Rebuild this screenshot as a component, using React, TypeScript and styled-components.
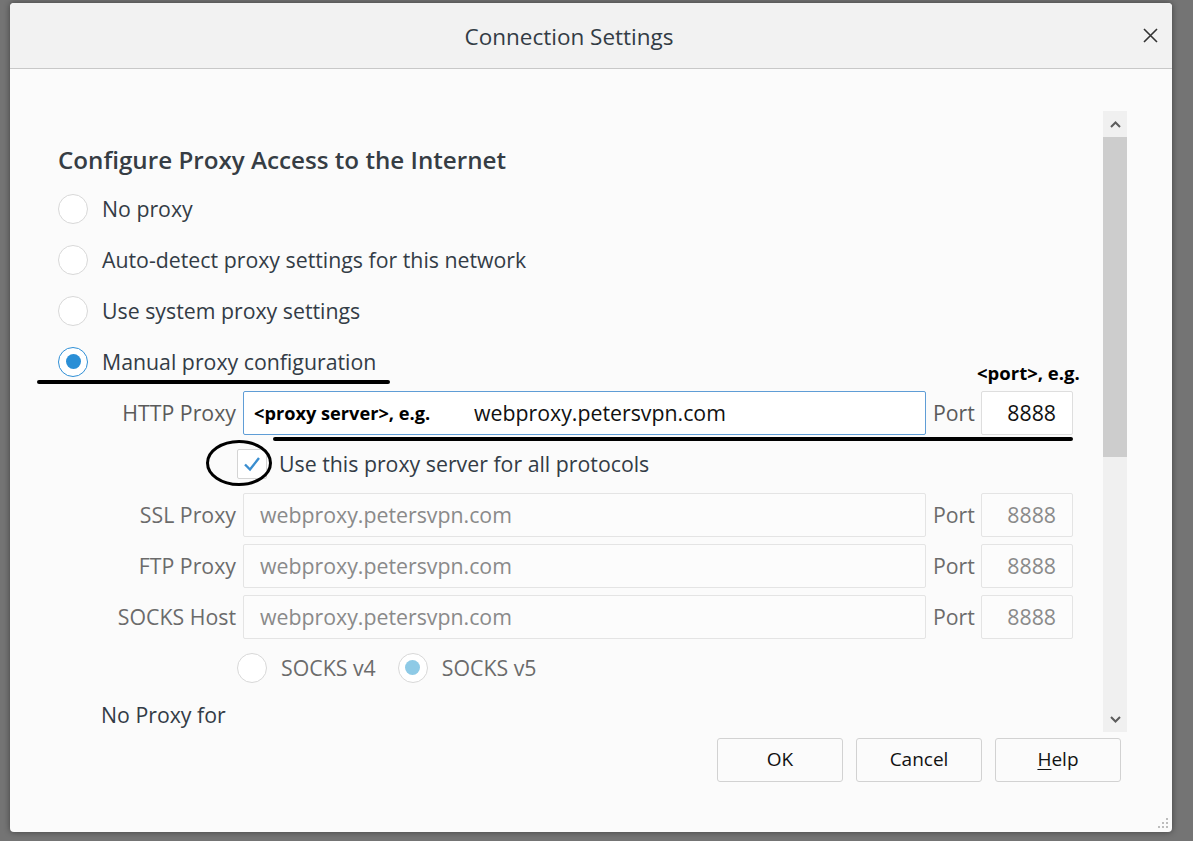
import React from 'react'
import styled, { createGlobalStyle } from 'styled-components'

const GlobalStyle = createGlobalStyle`
  html, body {
    margin: 0;
    padding: 0;
    background: #747474;
  }
  * {
    box-sizing: border-box;
  }
  body {
    font-family: "Open Sans", "Noto Sans", sans-serif;
  }
`

const Page = styled.div`
  width: 1193px;
  height: 841px;
  padding: 3px 0 0 10px;
  background: #747474;
  overflow: hidden;
`

const Dialog = styled.div`
  width: 1162px;
  height: 829px;
  display: flex;
  flex-direction: column;
  background: #fbfbfb;
  border-radius: 4px;
  box-shadow: 0 0 6px rgba(0, 0, 0, 0.45);
  position: relative;
  overflow: hidden;
`

const TitleBar = styled.div`
  height: 66px;
  flex-shrink: 0;
  display: grid;
  grid-template-columns: 1fr auto 1fr;
  align-items: center;
  background: #f2f2f2;
  border-bottom: 1px solid #c8c8c8;
`

const Title = styled.div`
  grid-column: 2;
  font-size: 22.5px;
  color: #333c45;
  padding: 2px 44px 0 0;
`

const CloseButton = styled.div`
  justify-self: end;
  padding-right: 14px;
  display: flex;
  align-items: center;
  svg {
    display: block;
  }
`

const Body = styled.div`
  height: 663px;
  flex-shrink: 0;
  display: flex;
`

const Content = styled.div`
  flex: 1;
  overflow: hidden;
  padding: 63px 0 0 48px;
  color: #333c46;
`

const Heading = styled.div`
  height: 51px;
  display: flex;
  align-items: center;
  padding-top: 4px;
  font-size: 24.2px;
  font-weight: 600;
  color: #363d44;
`

const Row = styled.div<{ $indent?: number; $height?: number }>`
  height: ${p => p.$height ?? 51}px;
  display: flex;
  align-items: center;
  position: relative;
  padding-left: ${p => p.$indent ?? 0}px;
  font-size: 21.3px;
`

const RadioCircle = styled.span<{ $checked?: boolean; $disabled?: boolean }>`
  width: 30px;
  height: 30px;
  border-radius: 50%;
  flex-shrink: 0;
  background: #fff;
  border: 1px solid ${p => (p.$checked && !p.$disabled ? '#2f8fd6' : '#d8d8d8')};
  display: flex;
  align-items: center;
  justify-content: center;
  margin-right: 14px;
  &::after {
    content: '';
    width: 15px;
    height: 15px;
    border-radius: 50%;
    background: ${p => (p.$disabled ? '#8ecae6' : '#2b8fd6')};
    display: ${p => (p.$checked ? 'block' : 'none')};
  }
`

const RadioLabel = styled.span<{ $disabled?: boolean }>`
  color: ${p => (p.$disabled ? '#6b6b6b' : '#333c46')};
  margin-right: 22px;
`

const Underline = styled.div<{ $left: number; $width: number; $bottom: number }>`
  position: absolute;
  left: ${p => p.$left}px;
  width: ${p => p.$width}px;
  bottom: ${p => p.$bottom}px;
  height: 4px;
  border-radius: 2px;
  background: #000;
`

const FieldRow = styled.div`
  height: 51px;
  display: grid;
  grid-template-columns: 185px 683px 55px 92px;
  align-items: center;
  position: relative;
  font-size: 21.3px;
`

const FieldLabel = styled.div<{ $disabled?: boolean }>`
  text-align: right;
  padding-right: 7px;
  color: ${p => (p.$disabled ? '#6b6b6b' : '#5a5a5a')};
  white-space: nowrap;
`

const FieldBox = styled.div<{ $active?: boolean }>`
  height: 44px;
  display: flex;
  align-items: center;
  padding-left: ${p => (p.$active ? 10 : 16)}px;
  background: ${p => (p.$active ? '#fff' : '#fcfcfc')};
  border: 1px solid ${p => (p.$active ? '#5f9dd6' : '#e4e4e4')};
  border-radius: 2px;
  color: ${p => (p.$active ? '#111' : '#8a8a8a')};
  white-space: nowrap;
`

const Hint = styled.span`
  display: inline-block;
  width: 220px;
  font-size: 18.2px;
  font-weight: 700;
  color: #000;
`

const PortLabel = styled.div<{ $disabled?: boolean }>`
  padding-left: 7px;
  color: ${p => (p.$disabled ? '#6b6b6b' : '#5a5a5a')};
`

const PortBox = styled.div<{ $active?: boolean }>`
  height: 44px;
  display: flex;
  align-items: center;
  justify-content: flex-end;
  padding-right: 16px;
  position: relative;
  background: ${p => (p.$active ? '#fff' : '#fcfcfc')};
  border: 1px solid ${p => (p.$active ? '#dedede' : '#e4e4e4')};
  border-radius: 2px;
  color: ${p => (p.$active ? '#111' : '#8a8a8a')};
`

const PortHint = styled.span`
  position: absolute;
  left: -5px;
  bottom: calc(100% + 7px);
  font-size: 18.5px;
  font-weight: 700;
  color: #000;
  white-space: nowrap;
`

const CheckWrap = styled.span`
  position: relative;
  width: 30px;
  height: 30px;
  margin-right: 12px;
  flex-shrink: 0;
`

const CheckBox = styled.span`
  width: 30px;
  height: 30px;
  display: flex;
  align-items: center;
  justify-content: center;
  background: #fff;
  border: 1px solid #d4d4d4;
  border-radius: 2px;
`

const Ring = styled.svg`
  position: absolute;
  left: -31px;
  top: -9px;
  overflow: visible;
`

const Scrollbar = styled.div`
  width: 24px;
  margin: 42px 45px 0 0;
  display: flex;
  flex-direction: column;
  background: #f0f0f0;
`

const ScrollButton = styled.div`
  height: 26px;
  display: flex;
  align-items: center;
  justify-content: center;
`

const Thumb = styled.div`
  height: 320px;
  background: #cdcdcd;
`

const Track = styled.div`
  flex: 1;
`

const Footer = styled.div`
  flex: 1;
  display: flex;
  justify-content: flex-end;
  align-items: flex-start;
  gap: 13px;
  padding: 6px 51px 0 0;
`

const Button = styled.button`
  width: 126px;
  height: 44px;
  background: #fbfbfb;
  border: 1px solid #d2d2d2;
  border-radius: 3px;
  font-family: "Open Sans", "Noto Sans", sans-serif;
  font-size: 19px;
  color: #111;
  padding: 0 0 2px;
  u {
    text-decoration-thickness: 1px;
    text-underline-offset: 3px;
  }
`

const Grip = styled.svg`
  position: absolute;
  right: 3px;
  bottom: 3px;
`

const Chevron = ({ up }: { up?: boolean }) => (
  <svg width="11" height="7" viewBox="0 0 11 7">
    <polyline
      points={up ? '1,6 5.5,1.5 10,6' : '1,1 5.5,5.5 10,1'}
      fill="none"
      stroke="#5c5c5c"
      strokeWidth="2"
    />
  </svg>
)

const Radio = ({
  label,
  checked,
  disabled,
}: {
  label: string
  checked?: boolean
  disabled?: boolean
}) => (
  <>
    <RadioCircle $checked={checked} $disabled={disabled} />
    <RadioLabel $disabled={disabled}>{label}</RadioLabel>
  </>
)

const disabledRows = ['SSL Proxy', 'FTP Proxy', 'SOCKS Host']

export default function App() {
  return (
    <>
      <GlobalStyle />
      <Page>
        <Dialog>
          <TitleBar>
            <Title>Connection Settings</Title>
            <CloseButton>
              <svg width="15" height="15" viewBox="0 0 15 15">
                <path d="M1 1 L14 14 M14 1 L1 14" stroke="#333" strokeWidth="1.6" />
              </svg>
            </CloseButton>
          </TitleBar>
          <Body>
            <Content>
              <Heading>Configure Proxy Access to the Internet</Heading>
              <Row>
                <Radio label="No proxy" />
              </Row>
              <Row>
                <Radio label="Auto-detect proxy settings for this network" />
              </Row>
              <Row>
                <Radio label="Use system proxy settings" />
              </Row>
              <Row>
                <Radio label="Manual proxy configuration" checked />
                <Underline $left={-21} $width={353} $bottom={3} />
              </Row>
              <FieldRow>
                <FieldLabel>HTTP Proxy</FieldLabel>
                <FieldBox $active>
                  <Hint>&lt;proxy server&gt;, e.g.</Hint>
                  webproxy.petersvpn.com
                </FieldBox>
                <PortLabel>Port</PortLabel>
                <PortBox $active>
                  <PortHint>&lt;port&gt;, e.g.</PortHint>
                  8888
                </PortBox>
                <Underline $left={215} $width={800} $bottom={-3} />
              </FieldRow>
              <Row $indent={179}>
                <CheckWrap>
                  <CheckBox>
                    <svg width="18" height="16" viewBox="0 0 18 16">
                      <polyline
                        points="2,8.5 7,13.5 16,2"
                        fill="none"
                        stroke="#3a8ed0"
                        strokeWidth="2.4"
                      />
                    </svg>
                  </CheckBox>
                  <Ring width="66" height="46" viewBox="0 0 66 46">
                    <ellipse cx="33" cy="23" rx="31.5" ry="21.5" fill="none" stroke="#000" strokeWidth="3" />
                  </Ring>
                </CheckWrap>
                <span>Use this proxy server for all protocols</span>
              </Row>
              {disabledRows.map(label => (
                <FieldRow key={label}>
                  <FieldLabel $disabled>{label}</FieldLabel>
                  <FieldBox>webproxy.petersvpn.com</FieldBox>
                  <PortLabel $disabled>Port</PortLabel>
                  <PortBox>8888</PortBox>
                </FieldRow>
              ))}
              <Row $indent={179}>
                <Radio label="SOCKS v4" disabled />
                <Radio label="SOCKS v5" checked disabled />
              </Row>
              <Row $indent={43} $height={42}>No Proxy for</Row>
            </Content>
            <Scrollbar>
              <ScrollButton>
                <Chevron up />
              </ScrollButton>
              <Thumb />
              <Track />
              <ScrollButton>
                <Chevron />
              </ScrollButton>
            </Scrollbar>
          </Body>
          <Footer>
            <Button>OK</Button>
            <Button>Cancel</Button>
            <Button>
              <u>H</u>elp
            </Button>
          </Footer>
          <Grip width="12" height="12" viewBox="0 0 12 12">
            {[
              [10, 2],
              [10, 6],
              [6, 6],
              [10, 10],
              [6, 10],
              [2, 10],
            ].map(([x, y]) => (
              <rect key={`${x}-${y}`} x={x - 1} y={y - 1} width="2" height="2" fill="#bdbdbd" />
            ))}
          </Grip>
        </Dialog>
      </Page>
    </>
  )
}
